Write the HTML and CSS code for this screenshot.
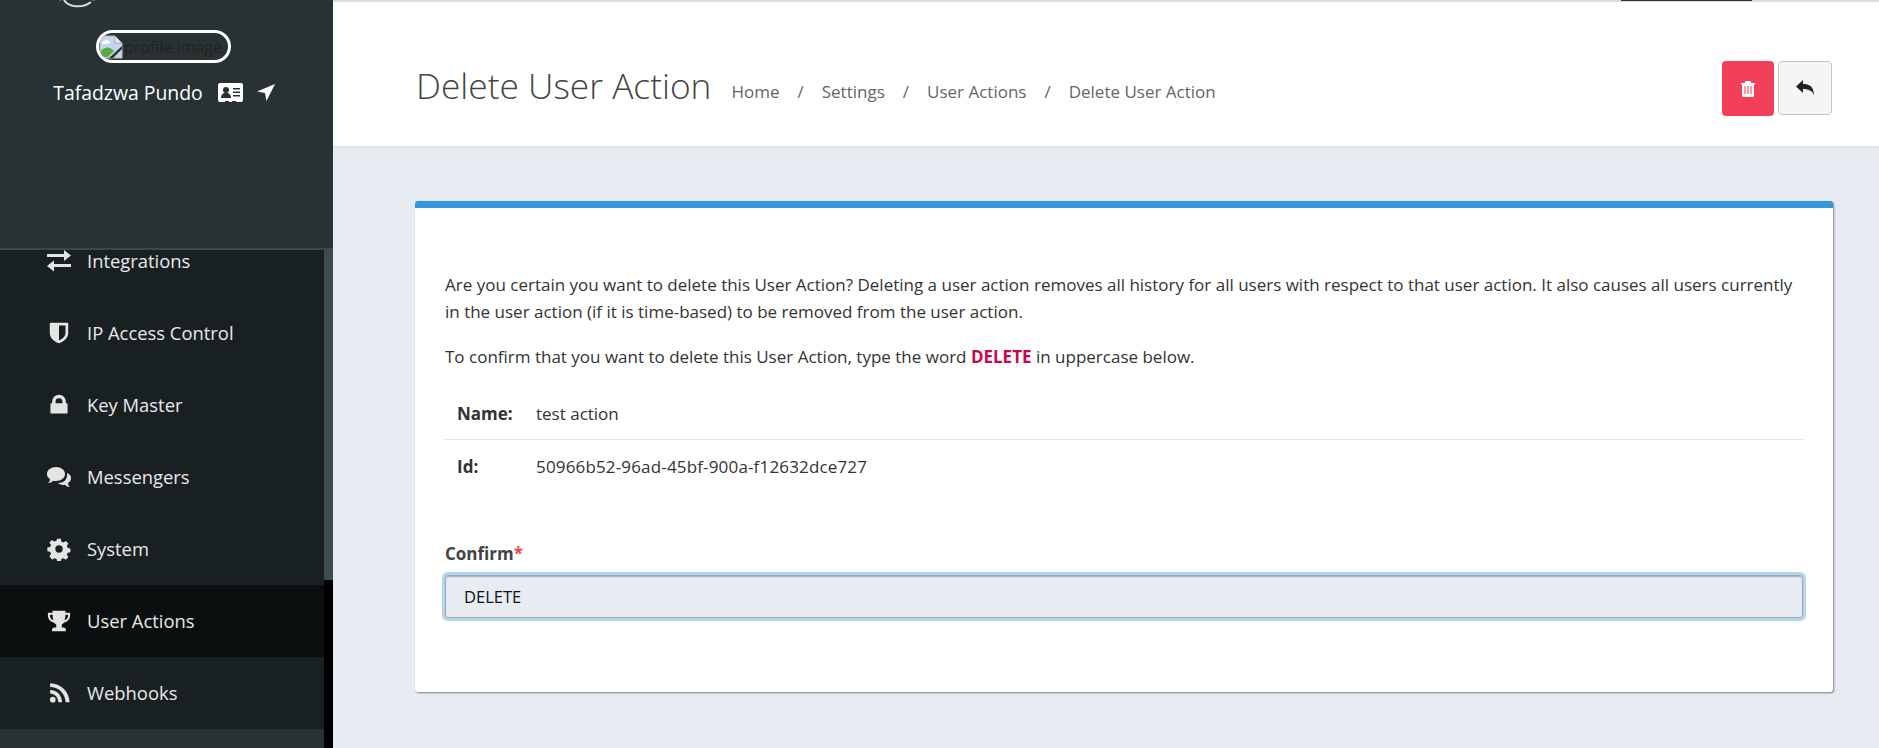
FILE: index.html
```html
<!DOCTYPE html>
<html lang="en">
<head>
    <meta charset="UTF-8">
    <title>Delete User Action</title>
    <link rel="stylesheet" href="styles.css">
</head>
<body>
    <aside class="sidebar">
        <div class="profile">
            <svg class="logo-arc" width="50" height="10" viewBox="0 0 50 10"><path d="M14 0c4 7 18 9 27 2" fill="none" stroke="#d8dcdc" stroke-width="2"/><path d="M8 0h4l-1 1zM41 0h5l-2 1z" fill="#b5651d"/></svg>
            <div class="avatar">
                <svg class="broken-img" width="24" height="24" viewBox="0 0 24 24"><path d="M1 1h15l7 7v15H1z" fill="#c3d6ee" stroke="#bbb"/><path d="M16 1v7h7z" fill="#eee" stroke="#aaa"/><path d="M2 22v-6c5-5 9-4 13 0l-6 6z" fill="#5fa83e"/><path d="M3 8c1-3 6-4 8-1 1 2-7 3-8 1z" fill="#fff"/><path d="M10 23l13-12v3l-9 9z" fill="#283233"/></svg>
                <span class="avatar-alt">profile image</span>
            </div>
            <div class="profile-name">
                <span>Tafadzwa Pundo</span>
                <svg width="25" height="19" viewBox="0 0 25 19"><path d="M2 0h21a2 2 0 0 1 2 2v15a2 2 0 0 1-2 2h-5v-1h-4v1H11v-1H7v1H2a2 2 0 0 1-2-2V2a2 2 0 0 1 2-2z" fill="#fff"/><circle cx="8" cy="7" r="3" fill="#283233"/><path d="M3 15c0-7 10-7 10 0z" fill="#283233"/><path d="M15 5h7v1.500h-7zM15 8.500h7v1.500h-7zM15 12h7v1.500h-7z" fill="#283233"/></svg>
                <svg class="arrow-icon" width="18" height="18" viewBox="0 0 18 18"><path d="M18 0L9.500 17 8 9 0 7.500z" fill="#fff"/></svg>
            </div>
        </div>
        <div class="menu-wrap">
            <nav class="menu">
                <a class="menu-item first" href="#">
                    <svg class="menu-icon" viewBox="0 0 24 24"><path d="M0 6h17V2l7 5.500-7 5.500V9H0zM24 16H7v-3.500L0 18l7 5.500V19h17z" transform="translate(0 -1)"/></svg>
                    Integrations
                </a>
                <a class="menu-item" href="#">
                    <svg class="menu-icon" viewBox="-1 -1 26 26"><path fill-rule="evenodd" d="M3 1h18a1 1 0 0 1 1 1v10c0 6-6 10-10 11C8 22 2 18 2 12V2a1 1 0 0 1 1-1zm9 3v16c3-1 7-4 7-8V4z"/></svg>
                    IP Access Control
                </a>
                <a class="menu-item" href="#">
                    <svg class="menu-icon" viewBox="-2 -2 28 28"><path fill-rule="evenodd" d="M4 10V8a8 8 0 0 1 16 0v2h1a1 1 0 0 1 1 1v10a1 1 0 0 1-1 1H3a1 1 0 0 1-1-1V11a1 1 0 0 1 1-1zm4 0h8V8a4 4 0 0 0-8 0z"/></svg>
                    Key Master
                </a>
                <a class="menu-item" href="#">
                    <svg class="menu-icon" viewBox="0 0 24 24"><path d="M9 2c5 0 9 3 9 7s-4 7-9 7c-1 0-2 0-3-.3C5 17 3 18 1 18c1-1 2-2 2-4-2-1-3-3-3-5 0-4 4-7 9-7z"/><path d="M20 8c3 1 4 3 4 5 0 2-1 4-3 5 0 2 1 3 2 4-2 0-4-1-5-2.300-2 .5-5 0-7-1.700 5 0 10-3 9-10z"/></svg>
                    Messengers
                </a>
                <a class="menu-item" href="#">
                    <svg class="menu-icon" viewBox="-1 -1 26 26"><path fill-rule="evenodd" d="M10 1h4l.6 3 2.200.9 2.600-1.700 2.800 2.800-1.700 2.600.9 2.200 3 .6v4l-3 .6-.9 2.200 1.700 2.600-2.800 2.800-2.600-1.700-2.200.9-.6 3h-4l-.6-3-2.200-.9-2.600 1.700L1.600 19.800l1.700-2.600-.9-2.200-3-.6v-4l3-.6.9-2.200L1.600 5 4.400 2.200l2.600 1.700 2.200-.9zm2 7a4 4 0 1 0 0 8 4 4 0 0 0 0-8z"/></svg>
                    System
                </a>
                <a class="menu-item active" href="#">
                    <svg class="menu-icon" viewBox="-1 -1 26 26"><path fill-rule="evenodd" d="M5 1h14v2h5v3c0 4-3 7-6.500 7.500-.8 1-1.700 1.700-2.500 2.200V19h2c1.500 0 2.500 1 2.500 2.500V23h-15v-1.500C4.500 20 5.500 19 7 19h2v-3.300c-.8-.5-1.700-1.200-2.500-2.200C3 13 0 10 0 6V3h5zM2.200 5.200V6c0 2.500 1.500 4.500 3.800 5.200-.6-1.600-1-3.500-1-6zm19.600 0H19c0 2.500-.4 4.400-1 6 2.300-.7 3.800-2.700 3.800-5.200z"/></svg>
                    User Actions
                </a>
                <a class="menu-item" href="#">
                    <svg class="menu-icon" viewBox="-1.500 -1.500 27 27"><circle cx="5" cy="19.500" r="3.200"/><path d="M2 8.500v4.200c5 0 9 4 9.300 9.800h4.200C15 14 10 8.800 2 8.500z"/><path d="M2 1v4.300c10 0 17 7.500 17.500 17.200H24C23.500 10 14 1.200 2 1z"/></svg>
                    Webhooks
                </a>
            </nav>
            <div class="menu-scrollbar"><div class="menu-thumb"></div></div>
        </div>
    </aside>

    <main class="main">
        <div class="top-strip"><span class="top-tab"></span></div>
        <header class="page-head">
            <h1>Delete User Action</h1>
            <ol class="crumbs">
                <li>Home</li>
                <li>Settings</li>
                <li>User Actions</li>
                <li>Delete User Action</li>
            </ol>
            <div class="head-btns">
                <button class="btn btn-delete" type="button">
                    <svg width="16" height="16" viewBox="0 0 16 16"><path fill-rule="evenodd" d="M5.500 0h5l1 2H15v1.500h-1V15a1 1 0 0 1-1 1H3a1 1 0 0 1-1-1V3.500H1V2h3.500zM4.500 5v8h1V5zm3 0v8h1V5zm3 0v8h1V5z" fill="#fff"/></svg>
                </button>
                <button class="btn btn-back" type="button">
                    <svg width="18" height="16" viewBox="0 0 18 16"><path d="M7 0v4c6 0 11 2 11 12-1-5-5-7-11-7v4L0 6.500z" fill="#222"/></svg>
                </button>
            </div>
        </header>

        <section class="card">
            <p class="intro">Are you certain you want to delete this User Action? Deleting a user action removes all history for all users with respect to that user action. It also causes all users currently in the user action (if it is time-based) to be removed from the user action.</p>
            <p class="intro">To confirm that you want to delete this User Action, type the word <strong class="danger">DELETE</strong> in uppercase below.</p>
            <table class="details">
                <tr>
                    <th>Name:</th>
                    <td>test action</td>
                </tr>
                <tr>
                    <th>Id:</th>
                    <td class="id-value">50966b52-96ad-45bf-900a-f12632dce727</td>
                </tr>
            </table>
            <label class="confirm-label" for="confirm">Confirm<span class="req">*</span></label>
            <input class="confirm-input" id="confirm" type="text" value="DELETE">
        </section>
    </main>
</body>
</html>
```

FILE: styles.css
```css
html, body {
    height: 100%;
}
body {
    display: flex;
    margin: 0;
    height: 748px;
    overflow: hidden;
    background-color: #e7ebf2;
    font-family: 'Open Sans', sans-serif;
    font-size: 17px;
    color: #333;
}

/* sidebar */
.sidebar {
    display: flex;
    flex-direction: column;
    flex: 0 0 333px;
    height: 748px;
    background-color: #283233;
}
.profile {
    display: flex;
    flex-direction: column;
    align-items: center;
    flex: 0 0 250px;
    box-sizing: border-box;
    border-bottom: 2px solid #3d4748;
}
.logo-arc {
    display: block;
    align-self: flex-start;
    margin-left: 50px;
    height: 10px;
}
.avatar {
    display: flex;
    align-items: center;
    gap: 1px;
    box-sizing: border-box;
    width: 135px;
    height: 33px;
    margin-top: 20px;
    margin-right: 6px;
    border: 3px solid #fff;
    border-radius: 17px;
    overflow: hidden;
    white-space: nowrap;
}
.broken-img {
    flex: none;
}
.avatar-alt {
    font-size: 16px;
    color: #222;
}
.profile-name {
    display: flex;
    align-items: center;
    margin-top: 16px;
    margin-right: 5px;
    font-size: 19.4px;
    color: #fff;
}
.profile-name svg {
    margin-left: 15px;
}
.profile-name .arrow-icon {
    margin-left: 14px;
}
.menu-wrap {
    display: flex;
    flex: 1;
    min-height: 0;
}
.menu {
    flex: 1;
    overflow: hidden;
}
.menu-item {
    display: flex;
    align-items: center;
    box-sizing: border-box;
    height: 72px;
    padding: 0 0 2px 47px;
    background-color: #192022;
    color: #e9e9e9;
    font-size: 18.4px;
    text-decoration: none;
}
.menu-item.first {
    margin-top: -25px;
}
.menu-item.active {
    background-color: #0b0f10;
}
.menu-icon {
    flex: none;
    width: 24px;
    height: 24px;
    margin-top: 2px;
    margin-right: 16px;
    fill: #e4e4e4;
}
.menu-scrollbar {
    flex: 0 0 9px;
    background-color: #000;
}
.menu-thumb {
    height: 330px;
    background-color: #3d4c4e;
}

/* main */
.main {
    flex: 1;
    min-width: 0;
}
.top-strip {
    height: 2px;
    background-color: #ddd;
}
.top-tab {
    display: block;
    width: 131px;
    height: 1px;
    margin-left: 1288px;
    background-color: #283233;
}
.page-head {
    display: flex;
    align-items: flex-start;
    box-sizing: border-box;
    height: 146px;
    padding: 59px 47px 0 83px;
    background-color: #fff;
    border-bottom: 2px solid #e2e2e2;
}
.page-head h1 {
    margin: 0;
    font-size: 35.3px;
    line-height: 48px;
    font-weight: 300;
    color: #444;
}
.crumbs {
    display: flex;
    margin: 19px 0 0 20px;
    padding: 0;
    list-style: none;
    font-size: 17px;
    line-height: 24px;
    color: #666;
}
.crumbs li + li::before {
    content: '/';
    padding: 0 18px;
}
.head-btns {
    display: flex;
    align-items: flex-start;
    gap: 4px;
    margin-left: auto;
}
.btn {
    display: flex;
    align-items: center;
    justify-content: center;
    padding: 0;
    border-radius: 4px;
    cursor: pointer;
}
.btn-delete {
    width: 52px;
    height: 55px;
    background-color: #f13f57;
    border: none;
}
.btn-back {
    width: 54px;
    height: 54px;
    background-color: #f5f5f5;
    border: 1px solid #c4c4c4;
}

/* card */
.card {
    box-sizing: border-box;
    height: 491px;
    margin: 53px 46px 0 82px;
    padding: 63px 30px 0 30px;
    background-color: #fff;
    border-top: 7px solid #3498db;
    border-radius: 3px;
    box-shadow: 1px 1px 2px rgba(0,0,0,0.45);
}
.intro {
    margin: 0 0 18px;
    line-height: 27px;
    color: #333;
}
.intro + .intro {
    margin-bottom: 17px;
}
.danger {
    color: #c7074d;
}
.details {
    width: 100%;
    border-collapse: collapse;
    color: #333;
}
.details th {
    width: 79px;
    padding: 0 0 0 12px;
    height: 52px;
    text-align: left;
    font-weight: 700;
}
.details td {
    padding: 0;
}
.details .id-value {
    letter-spacing: 0.16px;
}
.details tr:first-child th,
.details tr:first-child td {
    border-bottom: 1px solid #e3e3e3;
}
.confirm-label {
    display: block;
    margin-top: 50px;
    font-weight: 700;
    color: #444;
}
.req {
    color: #f13f57;
}
.confirm-input {
    display: block;
    box-sizing: border-box;
    width: 100%;
    height: 43px;
    margin-top: 10px;
    padding: 0 18px;
    background-color: #e7ebf2;
    border: 1px solid #a9a9a9;
    border-radius: 3px;
    box-shadow: 0 0 0 3px #afd5f0, inset 0 1px 1px rgba(0,0,0,0.25);
    font-family: inherit;
    font-size: 16.5px;
    color: #111;
    outline: none;
}
```
